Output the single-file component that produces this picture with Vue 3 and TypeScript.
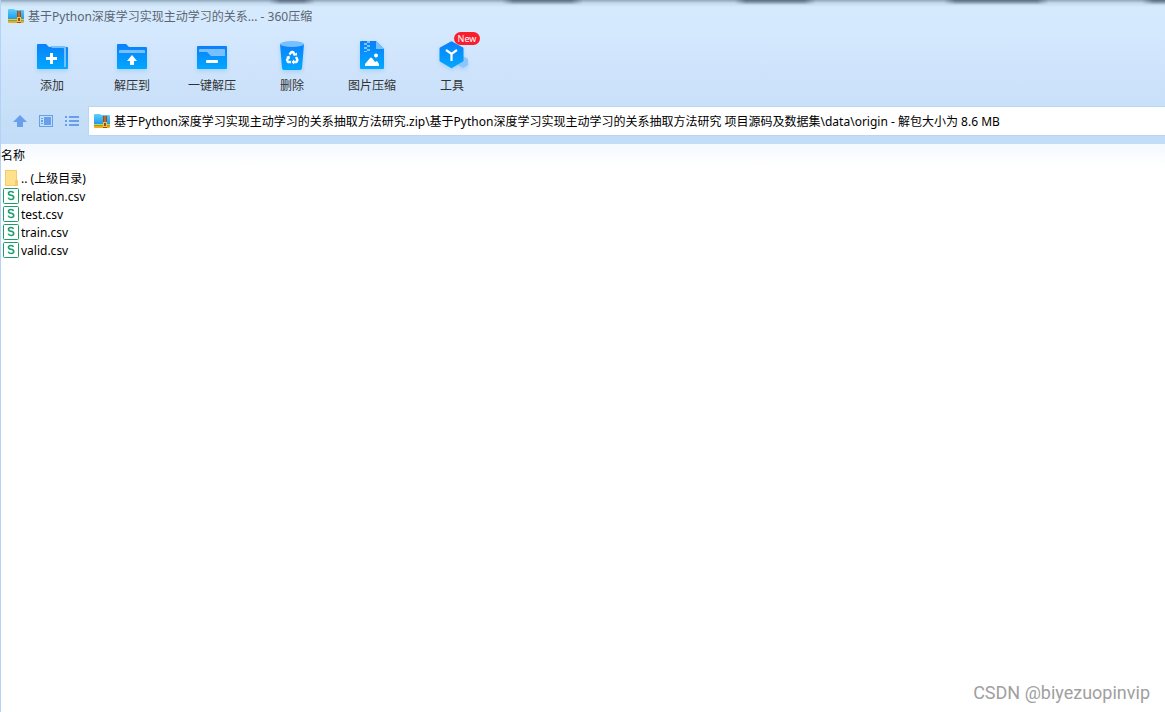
<script setup lang="ts">
import { ref } from 'vue'

interface Tool {
  id: string
  label: string
  badge?: string
}

const tools: Tool[] = [
  { id: 'add', label: '添加' },
  { id: 'extract', label: '解压到' },
  { id: 'quick', label: '一键解压' },
  { id: 'delete', label: '删除' },
  { id: 'image', label: '图片压缩' },
  { id: 'tools', label: '工具', badge: 'New' },
]

const files: string[] = ['relation.csv', 'test.csv', 'train.csv', 'valid.csv']

const address = ref(
  '基于Python深度学习实现主动学习的关系抽取方法研究.zip\\基于Python深度学习实现主动学习的关系抽取方法研究 项目源码及数据集\\data\\origin - 解包大小为 8.6 MB',
)
</script>

<template>
  <div class="window">
    <svg class="defs" width="0" height="0" aria-hidden="true">
      <defs>
        <linearGradient id="blue" x1="0" y1="0" x2="0" y2="1">
          <stop offset="0" stop-color="#0a80fa" />
          <stop offset="1" stop-color="#00a8ff" />
        </linearGradient>
        <linearGradient id="sky" x1="0" y1="0" x2="0" y2="1">
          <stop offset="0" stop-color="#5ed0fb" />
          <stop offset="1" stop-color="#1e9bf0" />
        </linearGradient>
        <symbol id="archive" viewBox="0 0 16 14">
          <path d="M0 1q0-1 1-1h5l1 1h8q1 0 1 1v8H0z" fill="url(#sky)" />
          <path d="M0 10h16v1H0z" fill="#f7c52d" />
          <path d="M0 11h16v2H0z" fill="#59b847" />
          <path d="M0 12h16v1q0 1-1 1H1q-1 0-1-1z" fill="#f5a623" />
          <path d="M9 2h4v12H9z" fill="#9a4c1c" />
          <path d="M10.500 2h1v6h-1z" fill="#d98b45" />
          <path d="M9 8h4v5H9zM10 9v3h2V9z" fill="#f6c445" fill-rule="evenodd" />
        </symbol>
      </defs>
    </svg>

    <header class="chrome">
      <div class="titlebar">
        <svg class="archive" aria-hidden="true"><use href="#archive" /></svg>
        <h1>基于Python深度学习实现主动学习的关系... - 360压缩</h1>
      </div>

      <nav class="toolbar">
        <button v-for="tool in tools" :key="tool.id" type="button" class="tool">
          <span class="picture">
            <svg viewBox="0 0 36 32" aria-hidden="true">
              <g v-if="tool.id === 'add'">
                <path d="M3 5q0-1 1-1h8l3 3h18q1 0 1 1v20q0 1-1 1H4q-1 0-1-1z" fill="url(#blue)" />
                <path d="M16 6h14q2 0 2 2v19h-2V9q0-1-1-1H18z" fill="#78bfff" />
                <path d="M16 13h3v4h4v3h-4v4h-3v-4h-4v-3h4z" fill="#fff" />
              </g>
              <g v-else-if="tool.id === 'extract'">
                <path d="M3 5q0-1 1-1h8l3 3h17q1 0 1 1v20q0 1-1 1H4q-1 0-1-1z" fill="url(#blue)" />
                <path d="M5 13v-2q0-1 1-1h24q1 0 1 1v2z" fill="#78bfff" />
                <path d="M18 15l5 6h-3v4h-4v-4h-3z" fill="#fff" />
              </g>
              <g v-else-if="tool.id === 'quick'">
                <rect x="3" y="6" width="30" height="23" rx="1" fill="url(#blue)" />
                <path d="M5 10q0-1 1-1h24q1 0 1 1v6H17l-4-4H5z" fill="#78bfff" />
                <rect x="12" y="20" width="12" height="3" rx="1" fill="#fff" />
              </g>
              <g v-else-if="tool.id === 'delete'">
                <path d="M6 4l2 24q0 2 2 2h16q2 0 2-2l2-24z" fill="url(#blue)" />
                <ellipse cx="18" cy="4" rx="12" ry="3" fill="#78bfff" />
                <g fill="none" stroke="#fff" stroke-width="2.400" stroke-linejoin="round">
                  <path d="M15.500 14.500l2-2.500h1.500l2 3" />
                  <path d="M22 17l1.500 3-1 2h-3" />
                  <path d="M17 22h-3l-1-2 1.500-3" />
                </g>
                <path d="M19 15.500h4v-3z M20 19.500v5l-2.500-2.500z M12 17l3.500-1.500.5 3.500z" fill="#fff" />
              </g>
              <g v-else-if="tool.id === 'image'">
                <path d="M6 2q0-1 1-1h15l8 8v19q0 1-1 1H7q-1 0-1-1z" fill="url(#blue)" />
                <path d="M22 1l8 8h-8z" fill="#78bfff" />
                <path
                  d="M13 1h3v2h-3z M10 3h3v2h-3z M13 5h3v2h-3z M10 7h3v2h-3z M13 9h3v2h-3z M10 11h3v1h-3z"
                  fill="#78c4ff"
                />
                <circle cx="22" cy="15.500" r="2" fill="#fff" />
                <path d="M11 26v-2l5-6q1-1 2 0l3 4 2-1 2 3v2z" fill="#fff" />
              </g>
              <g v-else>
                <path d="M29 16l5 3v6l-5 3-5-3v-6z" fill="#8bc6fb" />
                <path d="M17 1.500q.5-.5 1 0l11 6q.5.500.5 1v12q0 .5-.5 1l-11 6.500q-.5.500-1 0l-11-6.500q-.5-.5-.5-1v-12q0-.5.5-1z" fill="url(#blue)" />
                <path d="M12 10l5.500 4 5.500-4M17.500 14v7" fill="none" stroke="#fff" stroke-width="2.200" />
              </g>
            </svg>
            <span v-if="tool.badge" class="badge">{{ tool.badge }}</span>
          </span>
          <span>{{ tool.label }}</span>
        </button>
      </nav>

      <div class="location">
        <button type="button" class="view" aria-label="向上">
          <svg viewBox="0 0 16 16"><path d="M8 2l7 7h-4v5H5V9H1z" /></svg>
        </button>
        <button type="button" class="view" aria-label="预览">
          <svg viewBox="0 0 16 16">
            <path d="M1 2h14v12H1zM2 3v10h12V3z" fill-rule="evenodd" />
            <path d="M3 5h2v1H3zM3 7h2v2H3zM3 10h2v1H3zM6 4h7v8H6z" />
          </svg>
        </button>
        <button type="button" class="view" aria-label="列表">
          <svg viewBox="0 0 16 16">
            <path d="M1 3h2v2H1zM1 7h2v2H1zM1 11h2v2H1zM5 3h10v2H5zM5 7h10v2H5zM5 11h10v2H5z" />
          </svg>
        </button>
        <label class="address">
          <svg class="archive" aria-hidden="true"><use href="#archive" /></svg>
          <input v-model="address" type="text" aria-label="路径" />
        </label>
      </div>
    </header>

    <main class="content">
      <table>
        <thead>
          <tr><th scope="col">名称</th></tr>
        </thead>
        <tbody>
          <tr>
            <td>
              <a href="#" class="entry">
                <svg viewBox="0 0 16 18" aria-hidden="true">
                  <path d="M2 0h12v16H2z" fill="#ffe08c" />
                  <path d="M2 0h12v10h1v6H2zM3 1v14h9v-5h1V1z" fill="#f2cc68" fill-rule="evenodd" />
                </svg>
                <span>.. (上级目录)</span>
              </a>
            </td>
          </tr>
          <tr v-for="file in files" :key="file">
            <td>
              <a href="#" class="entry">
                <svg viewBox="0 0 16 18" aria-hidden="true">
                  <rect x="0.500" y="0.500" width="15" height="15" rx="1" fill="#fff" stroke="#1c9e68" />
                  <path
                    d="M10.500 5Q10 3.500 8 3.500 5.500 3.500 5.500 5.300 5.500 7 8 7.300 10.700 7.700 10.700 9.500 10.700 11.500 8 11.500 5.700 11.500 5.300 9.700"
                    fill="none"
                    stroke="#1c9e68"
                    stroke-width="1.600"
                  />
                </svg>
                <span>{{ file }}</span>
              </a>
            </td>
          </tr>
        </tbody>
      </table>
      <p class="watermark">CSDN @biyezuopinvip</p>
    </main>
  </div>
</template>

<style>
body {
  margin: 0;
}
</style>

<style scoped>
.window {
  display: flex;
  flex-direction: column;
  min-height: 100vh;
  box-sizing: border-box;
  font-family: 'Noto Sans', 'Noto Sans CJK SC', sans-serif;
  font-size: 12px;
  line-height: 18px;
  color: #000;
}

.defs {
  position: absolute;
}

.chrome {
  position: relative;
  border-left: 1px solid #b4d2f3;
  background: linear-gradient(#8fa5bb, #c3d8eb 3px, #d6eafe 7px, #d4e9fe 32px, #cfe4fc 70px, #c8e0f8 106px, #c3ddf8 136px);
}

.chrome::before {
  content: '';
  position: absolute;
  inset: 0 0 auto;
  height: 5px;
  background: linear-gradient(90deg, transparent 23%, #5c6e84 24%, #5c6e84 26%, transparent 27%, transparent 43%, #5c6e84 44%, #5c6e84 49%, transparent 50%, transparent 63%, #5c6e84 64%, #5c6e84 69%, transparent 70%, transparent 81%, #5c6e84 82%, #5c6e84 89%, transparent 90%, transparent 98%, #5c6e84 99%);
  mask-image: linear-gradient(#000, transparent);
}

.titlebar {
  display: flex;
  align-items: center;
  gap: 4px;
  height: 32px;
  padding-left: 7px;
}

.archive {
  flex: none;
  width: 16px;
  height: 14px;
}

h1 {
  margin: 0;
  padding-top: 2px;
  font-size: 12px;
  font-weight: 400;
  color: #5b6570;
}

button {
  padding: 0;
  border: 0;
  background: none;
  font: inherit;
}

.toolbar {
  display: flex;
  padding: 8px 11px 11px;
}

.tool {
  display: flex;
  flex-direction: column;
  align-items: center;
  gap: 5px;
  width: 80px;
  color: #333;
}

.picture {
  position: relative;
  height: 32px;
}

.picture svg {
  display: block;
  width: 36px;
  height: 32px;
  filter: drop-shadow(0 2px 2px #3a9cf544);
}

.badge {
  position: absolute;
  top: -8px;
  left: 20px;
  width: 26px;
  border-radius: 7px;
  background: #fa1e2d;
  color: #fff;
  font-size: 9px;
  line-height: 13px;
  text-align: center;
}

.location {
  display: flex;
  align-items: center;
  gap: 10px;
  padding: 0 0 8px 11px;
}

.view {
  width: 16px;
  height: 16px;
}

.view svg {
  display: block;
  width: 16px;
  height: 16px;
  fill: #689fed;
}

.address {
  display: flex;
  flex: 1;
  align-items: center;
  gap: 4px;
  height: 28px;
  margin-left: -2px;
  padding-left: 5px;
  border: 1px solid #b9d6f2;
  border-right: 0;
  background: #fff;
}

.address input {
  flex: 1;
  min-width: 0;
  padding: 2px 0 0;
  border: 0;
  outline: 0;
  background: none;
  color: #000;
  font: inherit;
}

.content {
  display: flex;
  flex: 1;
  flex-direction: column;
  justify-content: space-between;
  border-left: 1px solid #b4d2f3;
  background: linear-gradient(#f3f9ff, #fff 24px);
}

table {
  width: 100%;
  border-collapse: collapse;
}

th {
  height: 26px;
  padding: 0;
  font-weight: 400;
  line-height: 24px;
  text-align: left;
  vertical-align: top;
}

td {
  padding: 0 2px;
}

.entry {
  display: flex;
  align-items: center;
  gap: 2px;
  height: 18px;
  color: #000;
  text-decoration: none;
}

.entry svg {
  width: 16px;
  height: 18px;
}

.watermark {
  margin: 0 15px 7px;
  color: #a0a0a0;
  font-family: Roboto, 'Liberation Sans', Arial, sans-serif;
  font-size: 18px;
  line-height: 24px;
  text-align: right;
}
</style>
